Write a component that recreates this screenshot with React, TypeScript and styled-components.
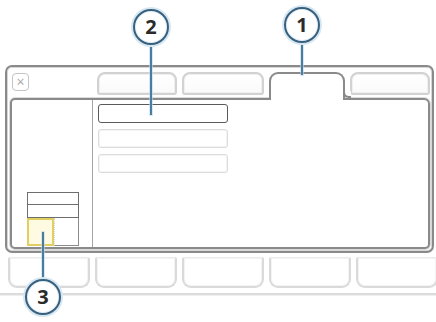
import React from "react";
import styled, { createGlobalStyle } from "styled-components";

const GlobalStyle = createGlobalStyle`
  html, body {
    margin: 0;
    padding: 0;
    background: #ffffff;
  }
  body {
    font-family: "Open Sans", "DejaVu Sans", sans-serif;
  }
`;

const Page = styled.div`
  position: relative;
  width: 436px;
  height: 322px;
  padding-top: 65px;
  box-sizing: border-box;
  overflow: hidden;
  background: #fff;
`;

const Frame = styled.div`
  margin-left: 5px;
  width: 429px;
  height: 188px;
  box-sizing: border-box;
  border: 2px solid #8a8a8a;
  border-radius: 7px;
  box-shadow: inset 0 0 0 1px #d6d6d6;
  padding: 0 2px 2px 3px;
  display: flex;
  flex-direction: column;
`;

const TabRow = styled.div`
  height: 31px;
  display: flex;
  align-items: flex-end;
  flex-shrink: 0;
`;

const CloseBox = styled.div`
  align-self: flex-start;
  margin: 6px 0 0 2px;
  width: 17px;
  height: 18px;
  box-sizing: border-box;
  border: 1.5px solid #c4c4c4;
  border-radius: 4px;
  display: flex;
  align-items: center;
  justify-content: center;
  color: #a8a8a8;
  font-size: 14px;
  line-height: 1;
`;

const TabList = styled.div`
  margin-left: 68px;
  display: flex;
  align-items: flex-end;
  gap: 5px;
`;

const Tab = styled.div<{ $w: number }>`
  width: ${(p) => p.$w}px;
  height: 23px;
  margin-bottom: 3px;
  box-sizing: border-box;
  border: 2px solid #d2d2d2;
  border-radius: 8px 8px 3px 3px;
  box-shadow: inset 0 0 0 1px #f0f0f0;
  background: linear-gradient(#ffffff, #fafafa);
`;

const ActiveTab = styled.div<{ $w: number }>`
  position: relative;
  z-index: 1;
  width: ${(p) => p.$w}px;
  height: 28px;
  margin-bottom: -2px;
  box-sizing: border-box;
  border: 2px solid #8a8a8a;
  border-bottom: none;
  border-radius: 9px 9px 0 0;
  background: #fff;

  &::after {
    content: "";
    position: absolute;
    right: -8px;
    bottom: 2px;
    width: 6px;
    height: 5px;
    border-left: 2px solid #8a8a8a;
    border-bottom: 2px solid #8a8a8a;
    border-bottom-left-radius: 6px;
    background: #fff;
  }
`;

const Panel = styled.div`
  flex: 1;
  display: flex;
  box-sizing: border-box;
  border: 2px solid #8a8a8a;
  border-radius: 5px 6px 5px 5px;
  box-shadow: 0 0 0 1px #dcdcdc;
  background: #fff;
`;

const Sidebar = styled.div`
  width: 81px;
  flex-shrink: 0;
  box-sizing: border-box;
  border-right: 1.5px solid #a4a4a4;
  display: flex;
  flex-direction: column;
  justify-content: flex-end;
  padding: 0 0 1px 15px;
`;

const Widget = styled.div`
  width: 52px;
  display: flex;
  flex-direction: column;
`;

const WidgetRow = styled.div<{ $h: number }>`
  height: ${(p) => p.$h}px;
  box-sizing: border-box;
  border: 1px solid #6e6e6e;
  border-bottom: none;
`;

const WidgetCells = styled.div`
  height: 28px;
  display: flex;
  border-top: 1px solid #6e6e6e;
`;

const Cell = styled.div<{ $on?: boolean }>`
  flex: 1;
  box-sizing: border-box;
  border: ${(p) => (p.$on ? "2px solid #e2cf62" : "1px dotted #d6d6d6")};
  border-top: ${(p) => (p.$on ? "2px solid #e2cf62" : "none")};
  border-right: ${(p) => (p.$on ? "2px solid #e2cf62" : "1px solid #8a8a8a")};
  border-bottom: ${(p) => (p.$on ? "2px solid #e2cf62" : "1px solid #8a8a8a")};
  background: ${(p) => (p.$on ? "#fffbe3" : "#fff")};
`;

const Main = styled.div`
  flex: 1;
  padding: 4px 0 0 5px;
  display: flex;
  flex-direction: column;
  gap: 6px;
`;

const Field = styled.div<{ $on?: boolean }>`
  width: 130px;
  height: 19px;
  box-sizing: border-box;
  border: ${(p) => (p.$on ? "1.5px solid #5a5a5a" : "1px solid #dcdcdc")};
  border-radius: 3px;
  box-shadow: ${(p) => (p.$on ? "none" : "inset 0 0 0 1px #f4f4f4")};
`;

const BottomRow = styled.div`
  margin: 4px 0 0 8px;
  display: flex;
  gap: 5px;
`;

const BottomTab = styled.div`
  width: 82px;
  height: 31px;
  flex-shrink: 0;
  box-sizing: border-box;
  border: 2px solid #dadada;
  border-top: 1px solid #ececec;
  border-radius: 2px 2px 9px 9px;
  box-shadow: inset 0 0 0 1px #f3f3f3;
`;

const BottomLine = styled.div`
  margin-top: 5px;
  height: 2px;
  background: #dcdcdc;
  box-shadow: 0 1px 0 #efefef;
`;

const Callout = styled.div<{ $x: number; $y: number }>`
  position: absolute;
  left: ${(p) => p.$x - 18}px;
  top: ${(p) => p.$y - 18}px;
  width: 36px;
  height: 36px;
  z-index: 5;
`;

const Bubble = styled.div`
  position: relative;
  z-index: 2;
  width: 36px;
  height: 36px;
  box-sizing: border-box;
  border: 2.5px solid #37607e;
  border-radius: 50%;
  box-shadow: 0 0 0 2px #d6e7f2, inset 0 0 0 1px #e3eef5;
  background: #fff;
  display: flex;
  align-items: center;
  justify-content: center;
  font-family: "Open Sans", "DejaVu Sans", sans-serif;
  font-weight: 700;
  font-size: 20px;
  color: #2b2b2b;
  line-height: 1;
`;

const Leader = styled.div<{ $len: number; $up?: boolean }>`
  position: absolute;
  left: 17px;
  width: 2px;
  height: ${(p) => p.$len}px;
  background: #4a7c9d;
  box-shadow: 0 0 0 1px rgba(190, 218, 236, 0.6);
  ${(p) => (p.$up ? `bottom: 34px;` : `top: 34px;`)}
`;

const callouts = [
  { n: "1", x: 302, y: 25, len: 34, up: false },
  { n: "2", x: 151, y: 27, len: 72, up: false },
  { n: "3", x: 43, y: 297, len: 49, up: true },
];

export default function App() {
  return (
    <>
      <GlobalStyle />
      <Page>
        <Frame>
          <TabRow>
            <CloseBox>×</CloseBox>
            <TabList>
              <Tab $w={80} />
              <Tab $w={82} />
              <ActiveTab $w={76} />
              <Tab $w={80} />
            </TabList>
          </TabRow>
          <Panel>
            <Sidebar>
              <Widget>
                <WidgetRow $h={12} />
                <WidgetRow $h={13} />
                <WidgetCells>
                  <Cell $on />
                  <Cell />
                </WidgetCells>
              </Widget>
            </Sidebar>
            <Main>
              <Field $on />
              <Field />
              <Field />
            </Main>
          </Panel>
        </Frame>
        <BottomRow>
          <BottomTab />
          <BottomTab />
          <BottomTab />
          <BottomTab />
          <BottomTab />
        </BottomRow>
        <BottomLine />

        {callouts.map((c) => (
          <Callout key={c.n} $x={c.x} $y={c.y}>
            <Leader $len={c.len} $up={c.up} />
            <Bubble>{c.n}</Bubble>
          </Callout>
        ))}
      </Page>
    </>
  );
}
